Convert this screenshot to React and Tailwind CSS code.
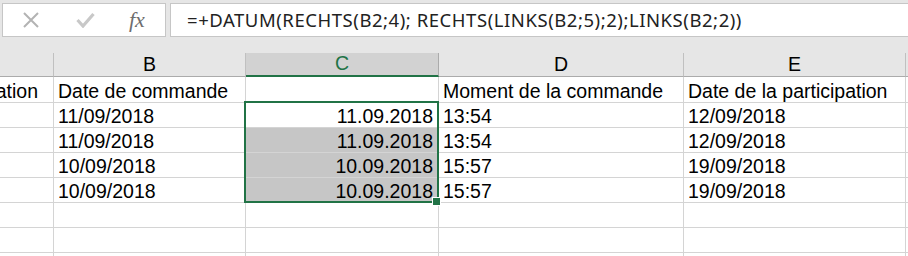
import React from "react";

const cols = [
  { key: "A", w: "w-[54px]" },
  { key: "B", w: "w-[192px]" },
  { key: "C", w: "w-[193px]" },
  { key: "D", w: "w-[245px]" },
  { key: "E", w: "w-[222px]" },
];

const rows = [
  ["Date de la participation", "Date de commande", "", "Moment de la commande", "Date de la participation"],
  ["", "11/09/2018", "11.09.2018", "13:54", "12/09/2018"],
  ["", "11/09/2018", "11.09.2018", "13:54", "12/09/2018"],
  ["", "10/09/2018", "10.09.2018", "15:57", "19/09/2018"],
  ["", "10/09/2018", "10.09.2018", "15:57", "19/09/2018"],
  ["", "", "", "", ""],
  ["", "", "", "", ""],
  ["", "", "", "", ""],
];

const font = { fontFamily: '"Liberation Sans", Arial, sans-serif' };

export default function App() {
  return (
    <div className="relative w-[908px] h-[256px] overflow-hidden bg-white" style={font}>
      {/* formula bar */}
      <div className="h-[53px] bg-[#e6e6e6] flex items-start pt-[3px] pl-[2px]">
        <div className="w-[164px] h-[34px] bg-white border border-[#c6c6c6] flex items-center">
          <svg width="18" height="16" viewBox="0 0 18 16" className="ml-[19px]">
            <path d="M2 1 L16 15 M16 1 L2 15" stroke="#b3b3b3" strokeWidth="2" fill="none" />
          </svg>
          <svg width="19" height="16" viewBox="0 0 19 16" className="ml-[36px]">
            <path d="M1.5 8 L7 14 L17.5 2" stroke="#c8c8c8" strokeWidth="3.2" fill="none" strokeLinejoin="miter" />
          </svg>
          <span
            className="ml-[34px] text-[22px] italic text-[#6e6e6e] leading-none"
            style={{ fontFamily: '"Liberation Serif", "DejaVu Serif", serif' }}
          >
            fx
          </span>
        </div>
        <div className="ml-[4px] flex-1 h-[34px] bg-white border-y border-l border-[#c6c6c6] flex items-center pl-[16px]">
          <span
            className="text-[18.5px] tracking-[0.55px] text-[#222] whitespace-nowrap"
            style={{ fontFamily: '"Noto Sans", "Open Sans", sans-serif' }}
          >
            =+DATUM(RECHTS(B2;4); RECHTS(LINKS(B2;5);2);LINKS(B2;2))
          </span>
        </div>
      </div>

      {/* column headers */}
      <div className="flex h-[24px] bg-[#e6e6e6]">
        {cols.map((c) => {
          const sel = c.key === "C";
          return (
            <div
              key={c.key}
              className={`${c.w} shrink-0 h-full flex items-center justify-center border-r text-[19.5px] ${
                sel
                  ? "bg-[#d2d2d2] text-[#217346] border-b-2 border-b-[#217346] border-r-[#ababab]"
                  : "border-b border-b-[#ababab] border-r-[#c0c0c0] text-black"
              }`}
            >
              {c.key === "A" ? "" : c.key}
            </div>
          );
        })}
        <div className="flex-1 h-full border-b border-b-[#ababab]" />
      </div>

      {/* rows */}
      {rows.map((r, ri) => (
        <div key={ri} className={`flex ${ri === 0 ? "h-[26px]" : "h-[25px]"}`}>
          {r.map((txt, ci) => {
            const isC = ci === 2;
            const gray = isC && ri >= 2 && ri <= 4;
            const isA = ci === 0;
            return (
              <div
                key={ci}
                className={`${cols[ci].w} shrink-0 h-full border-r border-b border-[#d4d4d4] flex items-end overflow-hidden whitespace-nowrap text-[19.5px] leading-[22px] text-black ${
                  gray ? "bg-[#c6c6c6]" : "bg-white"
                } ${isC ? "justify-end pr-[5px]" : isA ? "justify-end pr-[15px]" : "pl-[4px]"}`}
              >
                <span className="shrink-0">{txt}</span>
              </div>
            );
          })}
          <div className="flex-1 h-full border-b border-[#d4d4d4]" />
        </div>
      ))}

      {/* selection overlay */}
      <div className="absolute left-[244px] top-[101px] w-[195px] h-[102px] border-2 border-[#217346] pointer-events-none" />
      <div className="absolute left-[432px] top-[197px] w-[9px] h-[9px] bg-[#217346] border border-white" />
    </div>
  );
}
